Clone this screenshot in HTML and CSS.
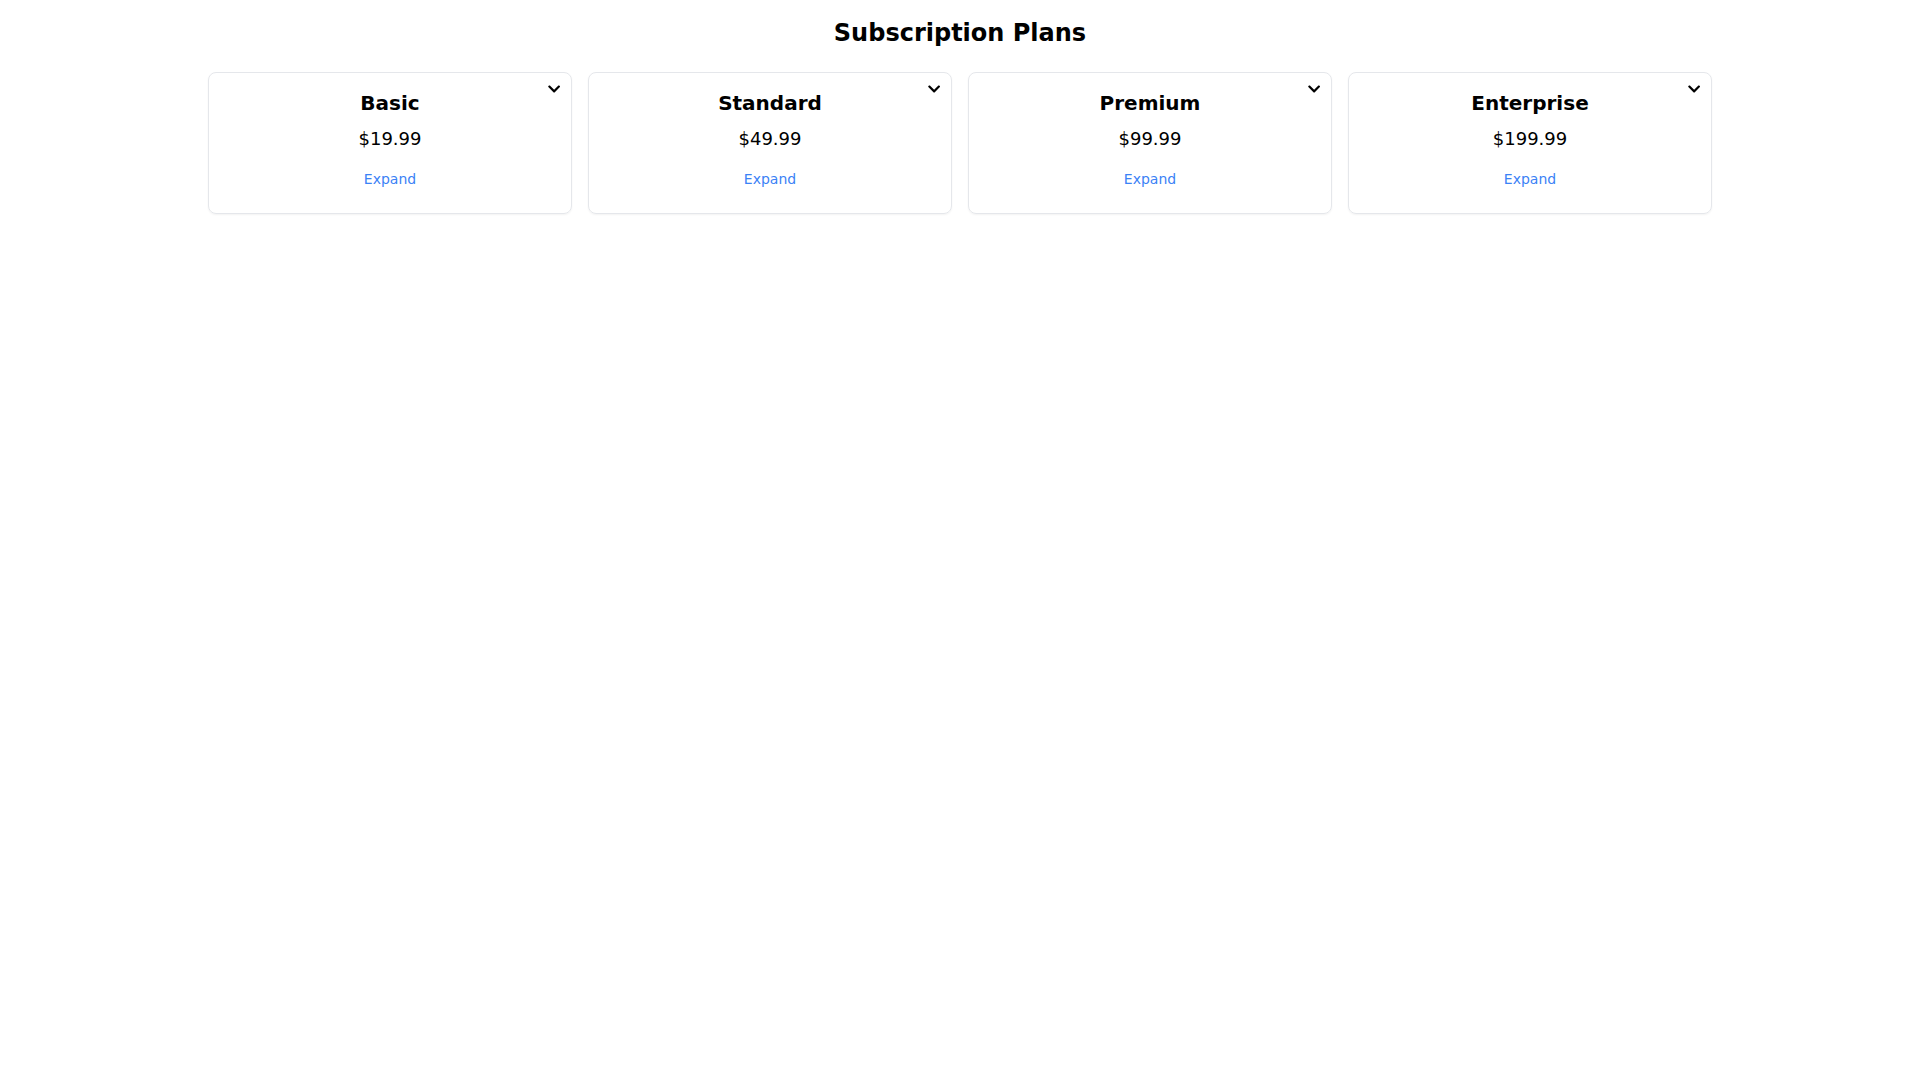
FILE: index.html
```html
<!DOCTYPE html>
<html lang="en">
<head>
    <meta charset="UTF-8">
    <meta name="viewport" content="width=device-width, initial-scale=1.0">
    <title>Subscription Plans</title>
    <link rel="stylesheet" href="styles.css">
</head>
<body>

    <div class="page">
        <!-- Page heading -->
        <h1 class="heading">Subscription Plans</h1>

        <!-- Plan cards -->
        <div class="plans">
            <div class="plan">
                <button class="toggle" aria-label="Toggle details">
                    <svg viewBox="0 0 448 512"><path d="M207.029 381.476L12.686 187.132c-9.373-9.373-9.373-24.569 0-33.941l22.667-22.667c9.357-9.357 24.522-9.375 33.901-.04L224 284.505l154.745-154.021c9.379-9.335 24.544-9.317 33.901.04l22.667 22.667c9.373 9.373 9.373 24.569 0 33.941L240.971 381.476c-9.373 9.372-24.569 9.372-33.942 0z"/></svg>
                </button>
                <h2 class="plan-name">Basic</h2>
                <p class="plan-price">$19.99</p>
                <button class="expand">Expand</button>
            </div>

            <div class="plan">
                <button class="toggle" aria-label="Toggle details">
                    <svg viewBox="0 0 448 512"><path d="M207.029 381.476L12.686 187.132c-9.373-9.373-9.373-24.569 0-33.941l22.667-22.667c9.357-9.357 24.522-9.375 33.901-.04L224 284.505l154.745-154.021c9.379-9.335 24.544-9.317 33.901.04l22.667 22.667c9.373 9.373 9.373 24.569 0 33.941L240.971 381.476c-9.373 9.372-24.569 9.372-33.942 0z"/></svg>
                </button>
                <h2 class="plan-name">Standard</h2>
                <p class="plan-price">$49.99</p>
                <button class="expand">Expand</button>
            </div>

            <div class="plan">
                <button class="toggle" aria-label="Toggle details">
                    <svg viewBox="0 0 448 512"><path d="M207.029 381.476L12.686 187.132c-9.373-9.373-9.373-24.569 0-33.941l22.667-22.667c9.357-9.357 24.522-9.375 33.901-.04L224 284.505l154.745-154.021c9.379-9.335 24.544-9.317 33.901.04l22.667 22.667c9.373 9.373 9.373 24.569 0 33.941L240.971 381.476c-9.373 9.372-24.569 9.372-33.942 0z"/></svg>
                </button>
                <h2 class="plan-name">Premium</h2>
                <p class="plan-price">$99.99</p>
                <button class="expand">Expand</button>
            </div>

            <div class="plan">
                <button class="toggle" aria-label="Toggle details">
                    <svg viewBox="0 0 448 512"><path d="M207.029 381.476L12.686 187.132c-9.373-9.373-9.373-24.569 0-33.941l22.667-22.667c9.357-9.357 24.522-9.375 33.901-.04L224 284.505l154.745-154.021c9.379-9.335 24.544-9.317 33.901.04l22.667 22.667c9.373 9.373 9.373 24.569 0 33.941L240.971 381.476c-9.373 9.372-24.569 9.372-33.942 0z"/></svg>
                </button>
                <h2 class="plan-name">Enterprise</h2>
                <p class="plan-price">$199.99</p>
                <button class="expand">Expand</button>
            </div>
        </div>
    </div>

</body>
</html>
```

FILE: styles.css
```css
/* Basic page styling */
body {
    margin: 0;
    background-color: #fff;
    color: #000;
    font-family: "DejaVu Sans", sans-serif;
}

/* Centered page container */
.page {
    max-width: 1536px;
    margin: 0 auto;
    padding: 19px 16px;
    box-sizing: border-box;
}

/* Heading styling */
.heading {
    margin: 0 0 25px;
    font-size: 24px;
    line-height: 28px;
    font-weight: bold;
    text-align: center;
}

/* Cards grid layout */
.plans {
    display: grid;
    grid-template-columns: repeat(4, 1fr);
    gap: 16px;
}

/* Individual card styling */
.plan {
    position: relative;
    padding: 16px;
    border: 1px solid #e5e7eb;
    border-radius: 8px;
    box-shadow: 0 1px 2px rgba(0, 0, 0, 0.05);
    text-align: center;
}

/* Chevron toggle in the corner */
.toggle {
    position: absolute;
    top: 9px;
    right: 11px;
    width: 12.25px;
    height: 14px;
    padding: 0;
    border: none;
    background: none;
    color: #000;
    cursor: pointer;
}

.toggle svg {
    display: block;
    width: 12.25px;
    height: 14px;
    fill: currentColor;
}

.plan-name {
    margin: 0;
    font-size: 20px;
    line-height: 28px;
    font-weight: bold;
}

.plan-price {
    margin: 8px 0 0;
    font-size: 18px;
    line-height: 28px;
}

/* Expand link button */
.expand {
    margin-top: 8px;
    padding: 8px 0;
    border: none;
    background: none;
    color: #3b82f6;
    font-family: inherit;
    font-size: 14px;
    line-height: 20px;
    cursor: pointer;
}
```
